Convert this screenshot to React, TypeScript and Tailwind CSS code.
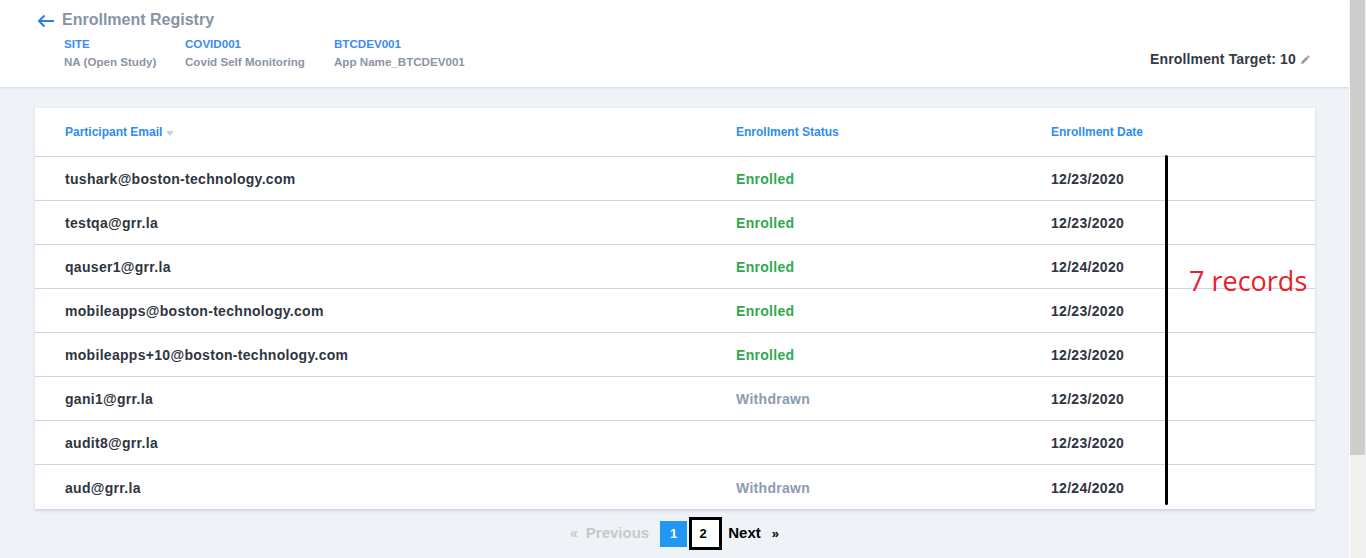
import React from "react";

const rows = [
  { email: "tushark@boston-technology.com", status: "Enrolled", date: "12/23/2020" },
  { email: "testqa@grr.la", status: "Enrolled", date: "12/23/2020" },
  { email: "qauser1@grr.la", status: "Enrolled", date: "12/24/2020" },
  { email: "mobileapps@boston-technology.com", status: "Enrolled", date: "12/23/2020" },
  { email: "mobileapps+10@boston-technology.com", status: "Enrolled", date: "12/23/2020" },
  { email: "gani1@grr.la", status: "Withdrawn", date: "12/23/2020" },
  { email: "audit8@grr.la", status: "", date: "12/23/2020" },
  { email: "aud@grr.la", status: "Withdrawn", date: "12/24/2020" },
];

export default function App() {
  return (
    <div className="flex h-[558px] w-[1366px] overflow-hidden bg-[#eff3f7]" style={{ fontFamily: '"Liberation Sans", Arial, sans-serif' }}>
      <div className="relative flex w-[1349px] flex-col">
        <header className="flex h-[87px] items-start justify-between bg-white pl-[37px] pr-[38px] shadow-[0_1px_2px_rgba(0,0,0,0.12)]">
          <div className="pt-[10px]">
            <div className="flex items-center gap-[7px]">
              <svg width="18" height="14" viewBox="0 0 18 14" className="mt-[1px]">
                <path d="M17 7H2M7.5 1.5L2 7l5.5 5.5" fill="none" stroke="#2b7de9" strokeWidth="2" />
              </svg>
              <span className="text-[16px] font-bold leading-[20px] text-[#8693a6]">Enrollment Registry</span>
            </div>
            <div className="mt-[5px] flex pl-[27px] text-[11.6px] font-bold leading-[18px]">
              <div className="w-[121px]">
                <div className="text-[#3d8af7]">SITE</div>
                <div className="text-[#8a95a5]">NA (Open Study)</div>
              </div>
              <div className="w-[149px]">
                <div className="text-[#3d8af7]">COVID001</div>
                <div className="text-[#8a95a5]">Covid Self Monitoring</div>
              </div>
              <div>
                <div className="text-[#3d8af7]">BTCDEV001</div>
                <div className="text-[#8a95a5]">App Name_BTCDEV001</div>
              </div>
            </div>
          </div>
          <div className="mt-[49px] flex items-center gap-[4px]">
            <span className="text-[14px] font-bold tracking-[0.15px] text-[#333a44]">Enrollment Target: 10</span>
            <svg width="11" height="11" viewBox="0 0 24 24">
              <path d="M3 17.25V21h3.75L17.81 9.94l-3.75-3.75L3 17.25zM20.71 7.04a1 1 0 000-1.41l-2.34-2.34a1 1 0 00-1.41 0l-1.83 1.83 3.75 3.75 1.83-1.83z" fill="#8a95a5" />
            </svg>
          </div>
        </header>

        <div className="mx-[35px] mt-[21px] w-[1280px] bg-white shadow-[0_1px_3px_rgba(0,0,0,0.12)]">
          <div className="flex h-[49px] items-center border-b border-[#c9d6ea] text-[12px] font-bold text-[#2e8cf0]">
            <div className="flex w-[701px] items-center gap-[4px] pl-[30px]">
              Participant Email
              <svg width="8" height="5" viewBox="0 0 8 5" className="mt-[2px]">
                <path d="M0 0h8L4 5z" fill="#c6d2e4" />
              </svg>
            </div>
            <div className="w-[315px]">Enrollment Status</div>
            <div>Enrollment Date</div>
          </div>
          {rows.map((r, i) => (
            <div key={i} className={`flex h-[44px] items-center pt-[2px] text-[14px] font-bold tracking-[0.3px] ${i < rows.length - 1 ? "border-b border-[#c9d6ea]" : ""}`}>
              <div className="w-[701px] pl-[30px] text-[#2f3540]">{r.email}</div>
              <div className={`w-[315px] ${r.status === "Enrolled" ? "text-[#2fa84f]" : "text-[#8c9bb0]"}`}>{r.status}</div>
              <div className="text-[#2f3540]">{r.date}</div>
            </div>
          ))}
          <div className="h-px bg-[#c9d6ea]" />
        </div>

        <div className="mt-[7px] flex items-center justify-center text-[15px] font-bold">
          <span className="text-[14px] text-[#c8c8c8]">«</span>
          <span className="ml-[8px] text-[#c8c8c8]">Previous</span>
          <span className="ml-[11px] flex h-[26px] w-[27px] items-center justify-center bg-[#2196f3] text-[13px] text-white">1</span>
          <span className="ml-[2px] flex h-[33px] w-[33px] items-center justify-center border-[3px] border-black bg-white pr-[5px] text-[13px] text-black">2</span>
          <span className="ml-[6px] text-black">Next</span>
          <span className="ml-[11px] text-[13px] text-black">»</span>
        </div>

        <div className="absolute left-[1165px] top-[155px] h-[350px] w-[3px] rounded-full bg-black" />
        <div className="absolute left-[1189px] top-[261px] text-[27px] text-[#e8202a]" style={{ fontFamily: '"Open Sans", sans-serif' }}>
          7 records
        </div>
      </div>
      <div className="flex w-[17px] flex-col border-l border-white bg-[#f0f0f0]">
        <div className="h-[455px] w-[15px] bg-[#cdcdcd]" />
      </div>
    </div>
  );
}
